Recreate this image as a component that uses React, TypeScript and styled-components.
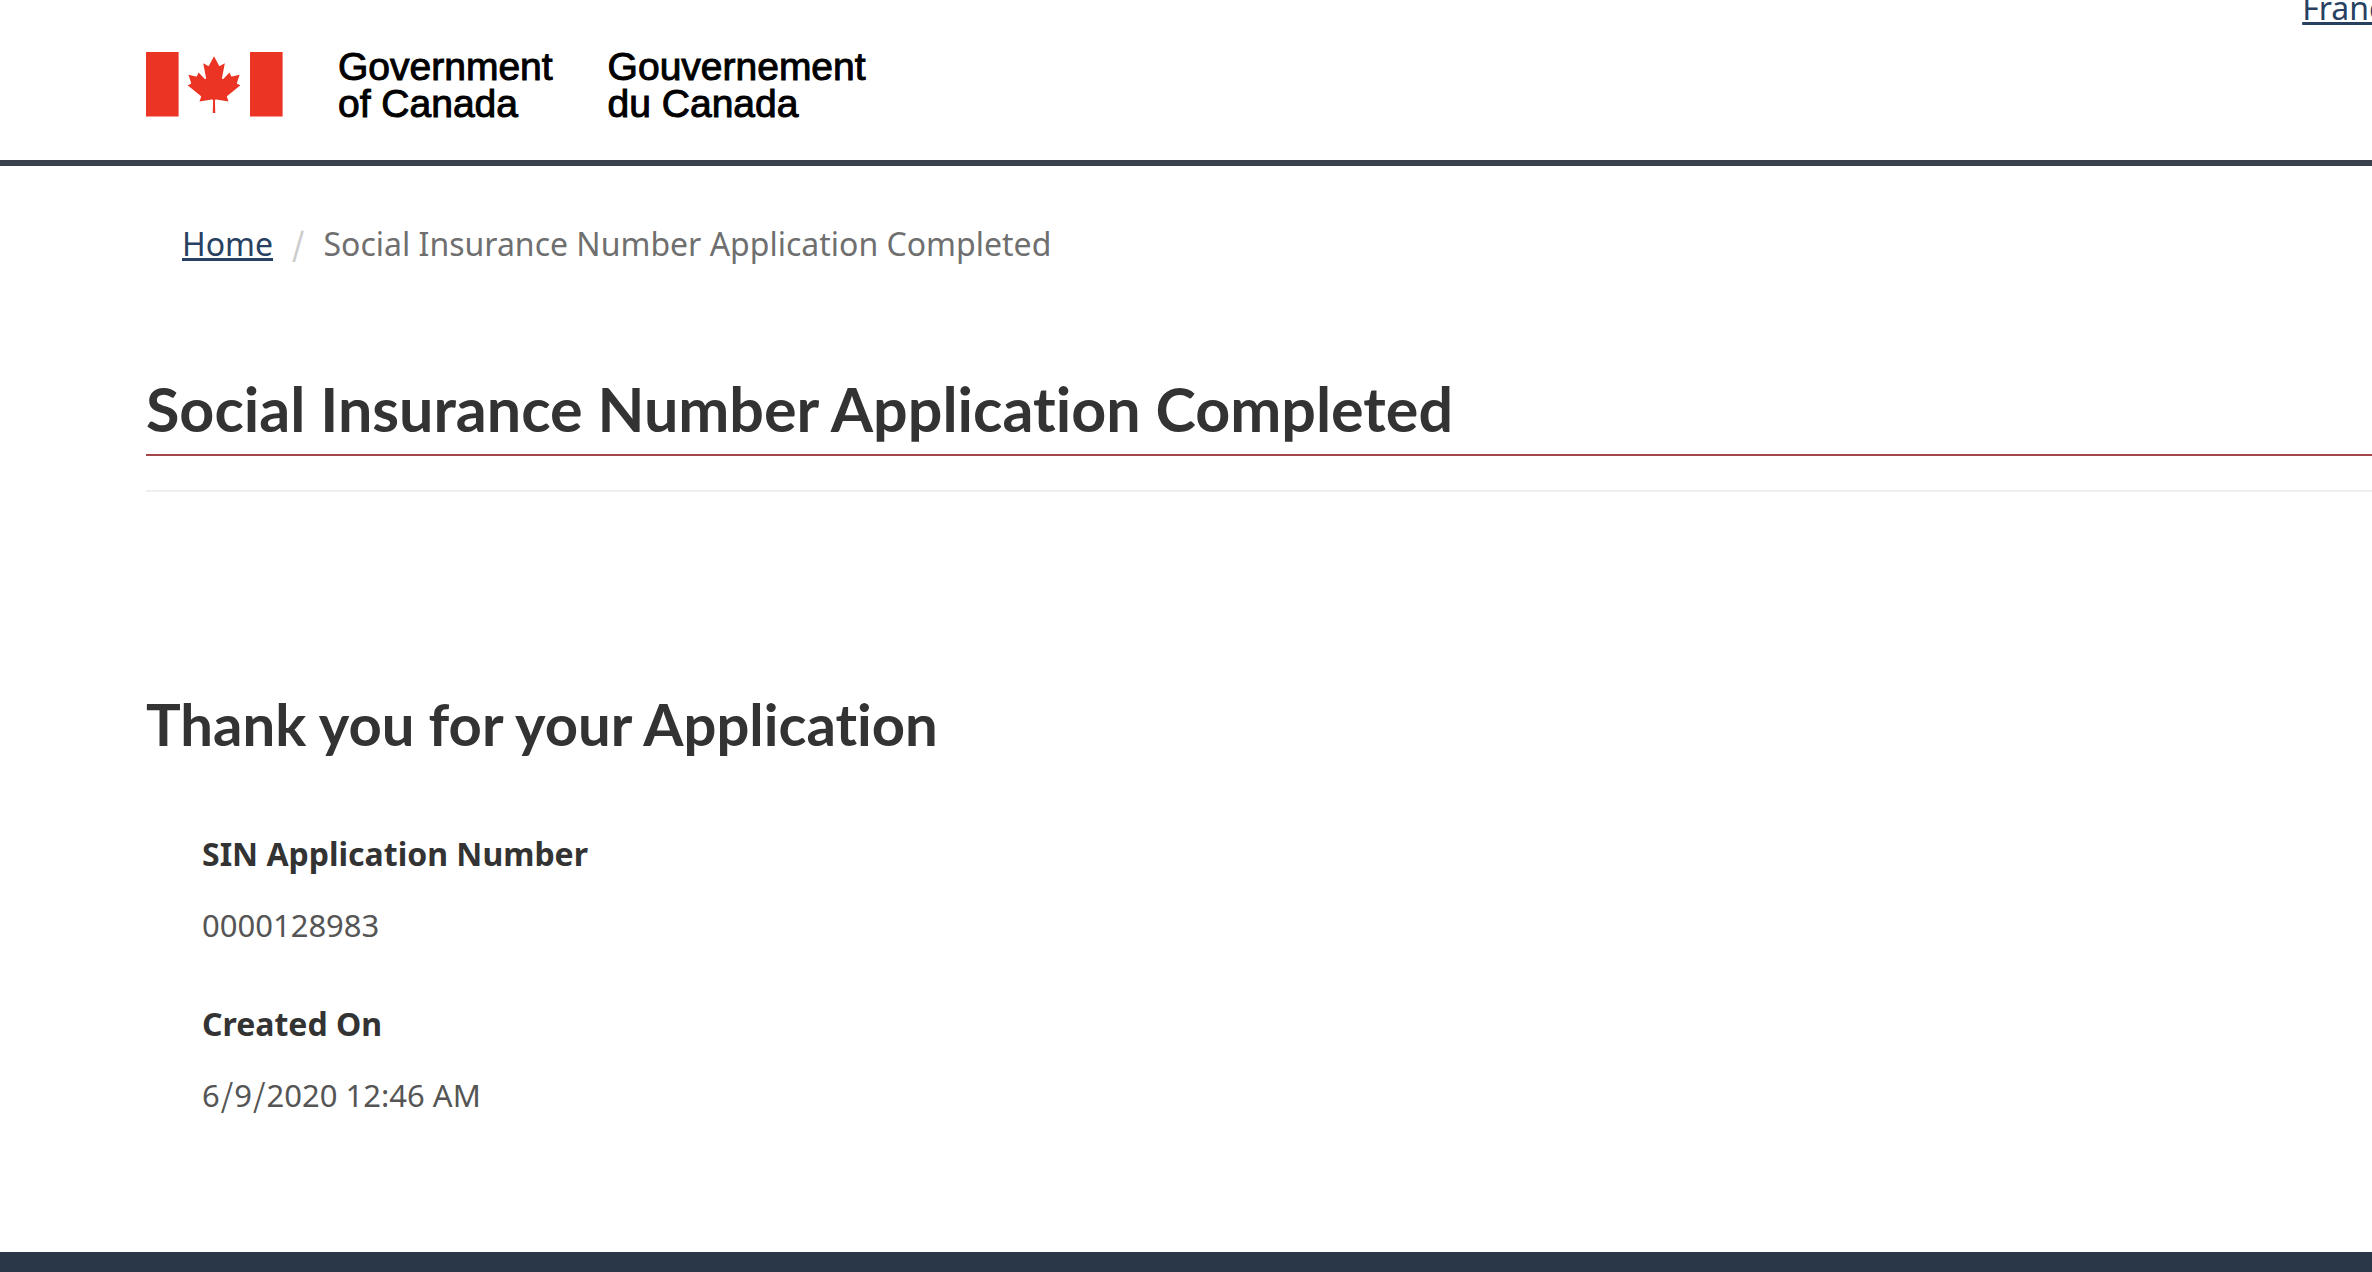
import React from 'react';
import styled, { createGlobalStyle, css } from 'styled-components';

const GlobalStyle = createGlobalStyle`
  *, *::before, *::after { box-sizing: border-box; }
  html { background: #fff; }
  body {
    margin: 0;
    font-family: "Noto Sans", sans-serif;
    font-size: 32px;
    line-height: 48px;
    color: #333;
  }
`;

const gutter = '146px';

const heading = css`
  font-family: Lato, sans-serif;
  font-weight: 700;
  font-variant-ligatures: none;
  line-height: 76px;
`;

const Page = styled.div`
  display: flex;
  flex-direction: column;
  min-height: 100vh;
  overflow: hidden;
`;

const Header = styled.header`
  display: flex;
  justify-content: space-between;
  align-items: flex-start;
  padding: 48px 0 38px ${gutter};
  border-bottom: 6px solid #3a414d;
`;

const Brand = styled.div`
  display: flex;
  align-items: flex-start;
  gap: 55px;
`;

const Flag = styled.svg`
  display: block;
  width: 137px;
  height: 65px;
  margin-top: 4px;
`;

const BrandText = styled.span`
  font-family: "Liberation Sans", Arial, sans-serif;
  font-size: 39px;
  line-height: 37px;
  color: #000;
  -webkit-text-stroke: 1px #000;
`;

const Language = styled.nav`
  margin: -64px -54px 0 0;
`;

const Link = styled.a`
  color: #284162;
  text-decoration: underline;
`;

const Trail = styled.ol`
  display: flex;
  align-items: baseline;
  margin: 0;
  padding: 54px 0 0 182px;
  list-style: none;
`;

const Crumb = styled.li`
  color: #6f6f6f;
`;

const Slash = styled.span`
  padding: 0 1px;
  font-family: "Noto Sans CJK SC", sans-serif;
  font-size: 32px;
  line-height: 1;
`;

const Separator = styled(Slash)`
  padding: 0 19px;
  font-weight: 500;
  color: #ccc;
`;

const Main = styled.main`
  flex: 1;
  padding-left: ${gutter};
`;

const Title = styled.h1`
  ${heading}
  margin: 103px 0 34px;
  padding-bottom: 7px;
  border-bottom: 2px solid #a3454b;
  font-size: 61px;
`;

const Rule = styled.hr`
  margin: 0;
  border: 0;
  border-top: 2px solid #eee;
`;

const Subtitle = styled.h2`
  ${heading}
  margin: 194px 0 68px;
  font-size: 58px;
`;

const Details = styled.dl`
  display: grid;
  gap: 51px;
  margin: 0;
  padding: 0 0 64px 56px;
`;

const Term = styled.dt`
  margin-bottom: 23px;
  font-weight: 700;
`;

const Value = styled.dd`
  margin: 0;
  font-size: 31px;
  color: #555;
`;

const Footer = styled.footer`
  height: 20px;
  background: #293749;
`;

const details = [
  { term: 'SIN Application Number', value: '0000128983' },
  { term: 'Created On', value: '6/9/2020 12:46 AM' },
];

function withSlashes(text: string) {
  return text.split('/').map((part, index) => (
    <React.Fragment key={index}>
      {index > 0 && <Slash>/</Slash>}
      {part}
    </React.Fragment>
  ));
}

function CanadaFlag() {
  return (
    <Flag viewBox="0 0 137 65" role="img" aria-label="Flag of Canada">
      <path fill="#eb3424" d="M0 0H32.6V64.5H0zM104 0H136.6V64.5H104z" />
      <path
        fill="#eb3424"
        transform="translate(68.3 32.4) scale(.01405)"
        d="m-110 2030 25-863a95 95 0 0 0-111-98l-859 151 116-320a65 65 0 0 0-20-73l-941-762 212-99a65 65 0 0 0 34-79l-186-572 542 115a65 65 0 0 0 73-38l105-247 423 454a65 65 0 0 0 111-57l-204-1052 327 189a65 65 0 0 0 91-27l352-652 352 652a65 65 0 0 0 91 27l327-189-204 1052a65 65 0 0 0 111 57l423-454 105 247a65 65 0 0 0 73 38l542-115-186 572a65 65 0 0 0 34 79l212 99-941 762a65 65 0 0 0-20 73l116 320-859-151a95 95 0 0 0-111 98l25 863z"
      />
    </Flag>
  );
}

export default function App() {
  return (
    <>
      <GlobalStyle />
      <Page>
        <Header>
          <Brand>
            <CanadaFlag />
            <BrandText>Government<br />of Canada</BrandText>
            <BrandText lang="fr">Gouvernement<br />du Canada</BrandText>
          </Brand>
          <Language aria-label="Language">
            <Link href="#fr" lang="fr">Français</Link>
          </Language>
        </Header>
        <nav aria-label="Breadcrumb">
          <Trail>
            <Crumb><Link href="#home">Home</Link></Crumb>
            <Crumb aria-current="page">
              <Separator aria-hidden="true">/</Separator>
              Social Insurance Number Application Completed
            </Crumb>
          </Trail>
        </nav>
        <Main>
          <Title>Social Insurance Number Application Completed</Title>
          <Rule />
          <Subtitle>Thank you for your Application</Subtitle>
          <Details>
            {details.map(({ term, value }) => (
              <div key={term}>
                <Term>{term}</Term>
                <Value>{withSlashes(value)}</Value>
              </div>
            ))}
          </Details>
        </Main>
        <Footer />
      </Page>
    </>
  );
}
